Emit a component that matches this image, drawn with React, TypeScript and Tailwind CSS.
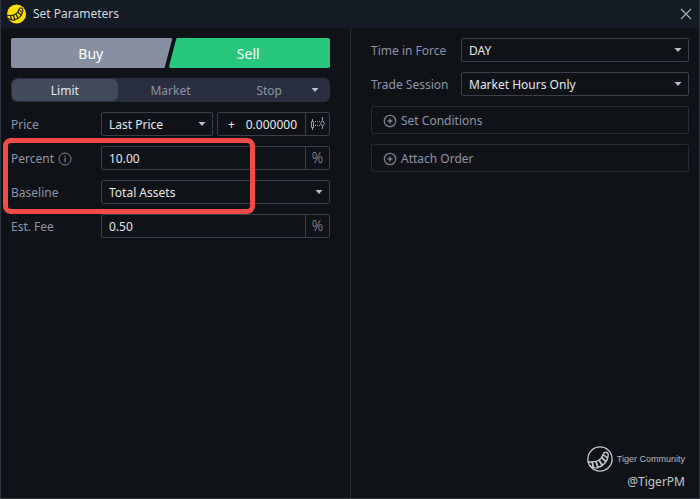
import React, { useState } from 'react';

type Side = 'buy' | 'sell';

const Caret = ({ className = '' }: { className?: string }) => (
  <svg className={`h-1 w-2 fill-[#b9bdc9] ${className}`} viewBox="0 0 8 4" aria-hidden="true">
    <path d="M.5 0h7L4 4z" />
  </svg>
);

const TigerMark = ({ className }: { className: string }) => (
  <g className={className} fill="none" strokeLinecap="round" strokeLinejoin="round">
    <path d="M1 14.600C6 15.200 10.600 14.200 13.200 11C14.800 8.900 14.600 7.100 16 6.100C17.800 5.100 19.800 6.400 19.600 8.800C19.200 13.600 15.200 18.800 9.800 20C7 20.600 4.400 19.800 2.600 18.200" />
    <path d="M4.900 15.200L5.800 19.600M8.400 14.800L10 19.600M11.300 13.300L14 17.600M13.700 10.700L17.200 14.200" strokeWidth="1.700" />
    <path d="M15 8.200L18.800 10.800" />
  </g>
);

const CandleIcon = () => (
  <svg className="h-4 w-4" viewBox="0 0 16 16" fill="none" stroke="#989daa" aria-hidden="true">
    <path d="M2.500 3v2.500M2.500 11.500v2.500M12.500 1v3M12.500 10.500v2.500" />
    <path d="M1.500 5.500h2v6h-2zM10.500 7.500l2-3 2 3-2 3z" />
    <path d="M5 5.500h5M5 9.500h5" strokeDasharray="1 1" />
  </svg>
);

const InfoIcon = () => (
  <svg className="h-3.5 w-3.5" viewBox="0 0 14 14" fill="none" stroke="#7b808e" aria-hidden="true">
    <circle cx="7" cy="7" r="6" />
    <path d="M7 6v4.200M7 3.800v1.200" strokeWidth="1.200" />
  </svg>
);

const PlusCircleIcon = () => (
  <svg className="h-3.5 w-3.5" viewBox="0 0 14 14" fill="none" stroke="#7b808e" aria-hidden="true">
    <circle cx="7" cy="7" r="5.700" strokeWidth="1.300" />
    <path d="M7 4.500v5M4.500 7h5" strokeWidth="1.500" />
  </svg>
);

interface SelectProps {
  id: string;
  options: string[];
  className?: string;
}

const Select: React.FC<SelectProps> = ({ id, options, className = '' }) => (
  <div className={`relative ${className}`}>
    <select
      id={id}
      className="block h-6 w-full appearance-none rounded-xs border border-[#3a3f49] bg-transparent pt-0.5 pr-6 pl-[7px] text-xs leading-5 text-[#e4e7ec] outline-none"
    >
      {options.map((option) => (
        <option key={option} className="bg-[#0f1317]">
          {option}
        </option>
      ))}
    </select>
    <Caret className="pointer-events-none absolute top-2.5 right-[7px]" />
  </div>
);

const PercentInput = ({ id, defaultValue }: { id: string; defaultValue: string }) => (
  <div className="flex h-6 min-w-0 flex-1 rounded-xs border border-[#3a3f49]">
    <input
      id={id}
      defaultValue={defaultValue}
      className="min-w-0 flex-1 bg-transparent px-[7px] pt-0.5 text-xs leading-5 text-[#e4e7ec] outline-none"
    />
    <span className="flex w-6 items-center justify-center border-l border-[#3a3f49] text-sm leading-5 font-light text-[#9a9fac]">%</span>
  </div>
);

interface FieldProps {
  id: string;
  label: string;
  info?: boolean;
  children: React.ReactNode;
}

const Field: React.FC<FieldProps> = ({ id, label, info, children }) => (
  <div className="flex h-6 items-center">
    <label htmlFor={id} className="flex w-[90px] shrink-0 items-center gap-1 pt-0.5 leading-5 text-[#8d93a6]">
      {label}
      {info && <InfoIcon />}
    </label>
    {children}
  </div>
);

export default function App() {
  const [side, setSide] = useState<Side>('sell');
  const [orderType, setOrderType] = useState('Limit');

  return (
    <div className="flex min-h-screen flex-col border-x border-b border-[#2e3440] bg-[#0f1317] font-['Noto_Sans',sans-serif] text-xs">
      {/* Title bar */}
      <header className="flex h-7 items-center bg-[#151b25] px-1.5">
        <svg className="h-5 w-5" viewBox="0 0 20 20" aria-hidden="true">
          <circle cx="9.500" cy="10" r="9.500" fill="#ffdf00" />
          <g transform="translate(-.6 -.9) scale(.84)">
            <TigerMark className="stroke-[#33300a] stroke-[1.400]" />
          </g>
        </svg>
        <h1 className="ml-1.5 leading-5 text-[#d3d7de]">Set Parameters</h1>
        <button type="button" aria-label="Close" className="ml-auto">
          <svg className="h-3.5 w-3.5" viewBox="0 0 14 14" stroke="#a9aeb9" strokeWidth="1.100">
            <path d="M2 2l10 10M12 2L2 12" />
          </svg>
        </button>
      </header>

      <main className="grid flex-1 grid-cols-2">
        {/* Order */}
        <section className="pt-2.5 pr-5 pl-2.5">
          <div className="flex text-sm text-white">
            <button
              type="button"
              aria-pressed={side === 'buy'}
              onClick={() => setSide('buy')}
              className="h-[30px] flex-1 rounded-xs bg-[#878fa2] pt-0.5 pr-0.5 [clip-path:polygon(0_0,100%_0,calc(100%-8px)_100%,0_100%)]"
            >
              Buy
            </button>
            <button
              type="button"
              aria-pressed={side === 'sell'}
              onClick={() => setSide('sell')}
              className="-ml-1 h-[30px] flex-1 rounded-xs bg-[#27c77d] pt-0.5 pr-0.5 [clip-path:polygon(8px_0,100%_0,100%_100%,0_100%)]"
            >
              Sell
            </button>
          </div>

          <div className="mt-2.5 flex h-6 rounded-md bg-[#292f3e] p-px leading-5 text-[#8d93a6]">
            {['Limit', 'Market'].map((type) => (
              <button
                key={type}
                type="button"
                onClick={() => setOrderType(type)}
                className={`flex-1 rounded-md pt-0.5 ${orderType === type ? 'bg-[#414b5d] text-[#e4e7ec]' : ''}`}
              >
                {type}
              </button>
            ))}
            <div className="flex flex-1">
              <button
                type="button"
                onClick={() => setOrderType('Stop')}
                className={`flex-1 rounded-md pt-0.5 pl-2 ${orderType === 'Stop' ? 'bg-[#414b5d] text-[#e4e7ec]' : ''}`}
              >
                Stop
              </button>
              <button type="button" aria-label="More order types" className="mr-1.5 flex w-4 items-center justify-center">
                <Caret />
              </button>
            </div>
          </div>

          <div className="mt-2.5 flex flex-col gap-2.5">
            <Field id="price" label="Price">
              <div className="flex min-w-0 flex-1 gap-1">
                <Select id="price" options={['Last Price']} className="min-w-0 flex-1" />
                <div className="flex h-6 min-w-0 flex-1 rounded-xs border border-[#3a3f49] text-[#e4e7ec]">
                  <button type="button" aria-label="Offset sign" className="w-6 pt-0.5 pl-1 leading-5">
                    +
                  </button>
                  <input
                    aria-label="Price offset"
                    defaultValue="0.000000"
                    className="min-w-0 flex-1 bg-transparent pt-0.5 pr-2 text-right leading-5 outline-none"
                  />
                  <button type="button" aria-label="Ticks" className="flex w-6 items-center justify-center border-l border-[#3a3f49]">
                    <CandleIcon />
                  </button>
                </div>
              </div>
            </Field>

            <div className="relative flex flex-col gap-2.5">
              <Field id="percent" label="Percent" info>
                <PercentInput id="percent" defaultValue="10.00" />
              </Field>
              <Field id="baseline" label="Baseline">
                <Select id="baseline" options={['Total Assets']} className="min-w-0 flex-1" />
              </Field>
              {/* Highlight frame */}
              <div className="pointer-events-none absolute -top-2 -bottom-2.5 -left-2 w-63 rounded-lg border-5 border-[#f24b48]" />
            </div>

            <Field id="fee" label="Est. Fee">
              <PercentInput id="fee" defaultValue="0.50" />
            </Field>
          </div>
        </section>

        {/* Conditions */}
        <section className="flex flex-col gap-2.5 border-l border-[#262b33] pt-2.5 pr-2.5 pb-1.5 pl-5">
          <Field id="tif" label="Time in Force">
            <Select id="tif" options={['DAY']} className="min-w-0 flex-1" />
          </Field>
          <Field id="session" label="Trade Session">
            <Select id="session" options={['Market Hours Only']} className="min-w-0 flex-1" />
          </Field>
          {['Set Conditions', 'Attach Order'].map((action) => (
            <button
              key={action}
              type="button"
              className="flex h-7 items-center gap-1 rounded-xs border border-[#262b33] px-[11px] pt-0.5 leading-5 text-[#8d93a6]"
            >
              <PlusCircleIcon />
              {action}
            </button>
          ))}

          <footer className="mt-auto flex flex-col items-end pr-1 text-[#c3c6cb]">
            <div className="flex items-center gap-1">
              <svg className="h-[26px] w-[26px]" viewBox="0 0 24 24" fill="none" aria-hidden="true">
                <circle cx="12" cy="12" r="11.200" stroke="#c3c6cb" strokeWidth="1.200" />
                <TigerMark className="stroke-[#c3c6cb] stroke-[1.300]" />
              </svg>
              <span className="font-['Liberation_Sans',sans-serif] text-[9px] text-[#b4b7bc]">Tiger Community</span>
            </div>
            <span className="leading-5">@TigerPM</span>
          </footer>
        </section>
      </main>
    </div>
  );
}
